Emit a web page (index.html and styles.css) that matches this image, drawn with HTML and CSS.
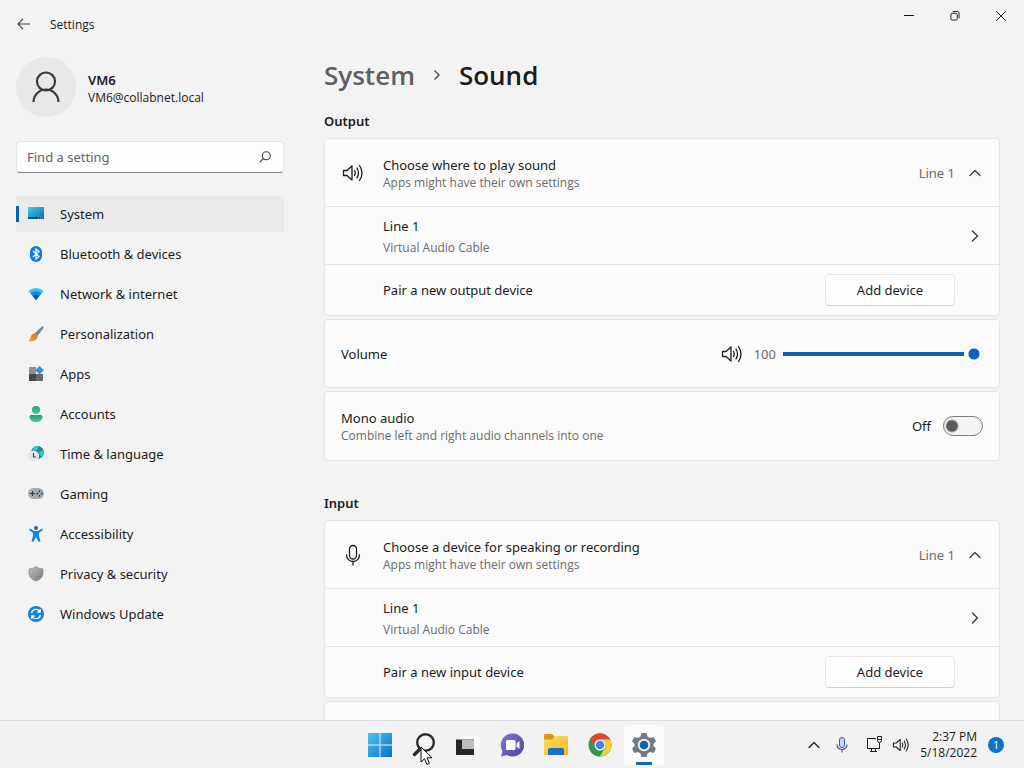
FILE: index.html
```html
<!DOCTYPE html>
<html lang="en">
<head>
<meta charset="utf-8">
<title>Settings - Sound</title>
<link rel="stylesheet" href="styles.css">
</head>
<body>
<svg class="defs" width="0" height="0" aria-hidden="true">
  <defs>
    <linearGradient id="g-screen" x1="0" y1="0" x2="1" y2="1"><stop offset="0" stop-color="#3fd0e8"/><stop offset="1" stop-color="#0a6aa8"/></linearGradient>
    <linearGradient id="g-brush" x1="0" y1="1" x2="1" y2="0"><stop offset="0" stop-color="#f7a145"/><stop offset="1" stop-color="#d96a1c"/></linearGradient>
    <linearGradient id="g-gray" x1="0" y1="0" x2="1" y2="1"><stop offset="0" stop-color="#c2c5c8"/><stop offset="1" stop-color="#74787c"/></linearGradient>
    <linearGradient id="g-green" x1="0" y1="0" x2="0" y2="1"><stop offset="0" stop-color="#1fa37a"/><stop offset="1" stop-color="#3fcf9a"/></linearGradient>
    <linearGradient id="g-win" x1="0" y1="0" x2="1" y2="1"><stop offset="0" stop-color="#4cc4f5"/><stop offset="1" stop-color="#0a72cc"/></linearGradient>
    <linearGradient id="g-folder" x1="0" y1="0" x2="1" y2="1"><stop offset="0" stop-color="#ffdc63"/><stop offset="1" stop-color="#f4b91f"/></linearGradient>
    <linearGradient id="g-chat" x1="0" y1="0" x2="1" y2="1"><stop offset="0" stop-color="#7e78dc"/><stop offset="1" stop-color="#4a44a6"/></linearGradient>
    <symbol id="i-speaker" viewBox="0 0 22 20">
      <path d="M1.500 7.500 H5 L10 3 V17 L5 12.500 H1.500 Z M12.500 7.500 Q14 10 12.500 12.500 M15 5 Q18 10 15 15 M17.500 2.500 Q22.500 10 17.500 17.500" fill="none" stroke="currentColor" stroke-width="1.300" stroke-linejoin="round" stroke-linecap="round"/>
    </symbol>
    <symbol id="i-mic" viewBox="0 0 16 22">
      <path d="M4.500 5 A3.500 3.500 0 0 1 11.500 5 V11.500 A3.500 3.500 0 0 1 4.500 11.500 Z M1.500 11 A6.500 6.500 0 0 0 14.500 11 M8 17.500 V21" fill="none" stroke="currentColor" stroke-width="1.300" stroke-linecap="round"/>
    </symbol>
    <symbol id="i-up" viewBox="0 0 12 12"><path d="M1 8.500 L6 3.500 L11 8.500" fill="none" stroke="currentColor" stroke-width="1.200" stroke-linecap="round" stroke-linejoin="round"/></symbol>
    <symbol id="i-right" viewBox="0 0 12 12"><path d="M3.500 1 L8.500 6 L3.500 11" fill="none" stroke="currentColor" stroke-width="1.300" stroke-linecap="round" stroke-linejoin="round"/></symbol>
    <symbol id="i-crumb" viewBox="0 0 12 12"><path d="M4 2 L8 6 L4 10" fill="none" stroke="currentColor" stroke-width="1.700" stroke-linecap="round" stroke-linejoin="round"/></symbol>
  </defs>
</svg>

<div class="window">
  <header class="titlebar">
    <button class="back" aria-label="Back"><svg width="14" height="12" viewBox="0 0 14 12"><path d="M6 1 L1 6 L6 11 M1 6 H13" fill="none" stroke="#444" stroke-width="1.100"/></svg></button>
    <span class="app-name">Settings</span>
    <div class="caption">
      <button aria-label="Minimize"><svg width="10" height="10" viewBox="0 0 10 10"><path d="M0 4.500 H10" stroke="#111"/></svg></button>
      <button aria-label="Restore"><svg width="10" height="10" viewBox="0 0 11 11"><rect x="1" y="2.500" width="7" height="7.500" rx="1.500" fill="none" stroke="#111"/><path d="M3 .5 H8 A2 2 0 0 1 10 2.500 V8" fill="none" stroke="#111"/></svg></button>
      <button aria-label="Close"><svg width="10" height="10" viewBox="0 0 10 10"><path d="M0 0 L10 10 M10 0 L0 10" stroke="#222"/></svg></button>
    </div>
  </header>

  <div class="content">
    <aside class="sidebar">
      <div class="profile">
        <div class="avatar"><svg width="28" height="32" viewBox="0 0 28 32"><circle cx="14" cy="10.500" r="9" fill="none" stroke="#3a3a3a" stroke-width="2.200"/><path d="M1.500 31 A12.500 12.500 0 0 1 26.500 31" fill="none" stroke="#3a3a3a" stroke-width="2.200"/></svg></div>
        <div class="user"><div class="user-name">VM6</div><div class="user-mail">VM6@collabnet.local</div></div>
      </div>
      <div class="search">
        <input type="text" placeholder="Find a setting" aria-label="Find a setting">
        <svg width="12" height="12" viewBox="0 0 12 12"><circle cx="7.300" cy="4.700" r="4" fill="none" stroke="#444" stroke-width="1.100"/><path d="M4.500 7.500 L.8 11.200" stroke="#444" stroke-width="1.200"/></svg>
      </div>
      <nav class="nav">
        <a href="#" class="active"><svg viewBox="0 0 16 16"><rect y="1" width="16" height="12" rx="1" fill="url(#g-screen)"/><path d="M0 11 H16 V12 A1 1 0 0 1 15 13 H1 A1 1 0 0 1 0 12 Z" fill="#124b72"/><path d="M10 12 H11 M12 12 H13 M14 12 H15" stroke="#9be"/></svg>System</a>
        <a href="#"><svg viewBox="0 0 16 16"><rect x="2" width="12" height="16" rx="6" fill="#1279e0"/><path d="M5 5 L11 10.500 L8 13 V3 L11 5.500 L5 11" fill="none" stroke="#fff" stroke-width="1.200"/></svg>Bluetooth &amp; devices</a>
        <a href="#"><svg viewBox="0 0 16 16"><path d="M.5 5 Q8 -1 15.500 5 L8 14 Z" fill="#35c3f2"/><path d="M2.500 7.300 Q8 3 13.500 7.300 L8 14 Z" fill="#1b86dd"/><path d="M4.800 10 Q8 7.500 11.200 10 L8 14 Z" fill="#0b55b0"/></svg>Network &amp; internet</a>
        <a href="#"><svg viewBox="0 0 16 16"><path d="M15 .3 Q16 .7 15.500 2 L9.500 10 L6.500 7.500 L13.500 .8 Q14.300 .1 15 .3 Z" fill="#7d878e"/><path d="M6.500 7.500 L9.500 10 C10 14 5 16 .5 15 C3 13 2 8 6.500 7.500 Z" fill="url(#g-brush)"/></svg>Personalization</a>
        <a href="#"><svg viewBox="0 0 16 16"><path d="M1 1 H8 V8 H1 Z" fill="#8b8f92"/><path d="M1 8 H8 V15 H1 Z" fill="#45494c"/><path d="M8 8 H15 V15 H8 Z" fill="#66696c"/><path d="M11.500 0 L15.800 4.300 L11.500 8.600 L7.200 4.300 Z" fill="#2b93e6"/></svg>Apps</a>
        <a href="#"><svg viewBox="0 0 16 16"><circle cx="8" cy="4" r="4" fill="url(#g-green)"/><path d="M3 9 H13 A1.600 1.600 0 0 1 14.500 10.500 C14.500 14 12 16 8 16 S1.500 14 1.500 10.500 A1.600 1.600 0 0 1 3 9 Z" fill="url(#g-green)"/></svg>Accounts</a>
        <a href="#"><svg viewBox="0 0 16 16"><circle cx="9.500" cy="6.500" r="6.500" fill="#138da8"/><path d="M5.500 1.500 Q8.500 -.5 11 .3 L9 4 H5 Z M12 5 L15.800 5 Q16.300 8 14 11 L11 8 Z" fill="#35c6cc"/><circle cx="5.500" cy="10" r="5.500" fill="#e6e6ea"/><path d="M5.500 7 V11 H8" fill="none" stroke="#444" stroke-width="1.200"/></svg>Time &amp; language</a>
        <a href="#"><svg viewBox="0 0 16 16"><rect y="2" width="16" height="11" rx="5.500" fill="#a5adb4"/><path d="M4.500 5 V10 M2 7.500 H7" stroke="#353a3e" stroke-width="1.200"/><g fill="#353a3e"><circle cx="11.500" cy="5.200" r=".9"/><circle cx="11.500" cy="9.800" r=".9"/><circle cx="9.300" cy="7.500" r=".9"/><circle cx="13.700" cy="7.500" r=".9"/></g></svg>Gaming</a>
        <a href="#"><svg viewBox="0 0 16 16"><circle cx="8" cy="2" r="2" fill="#1269c0"/><path d="M2 2.500 L6 5 H10 L14 2.500 L15 4 L11 7 V10 L12.500 15.300 L10.500 16 L8 11 L5.500 16 L3.500 15.300 L5 10 V7 L1 4 Z" fill="#1b82dc"/></svg>Accessibility</a>
        <a href="#"><svg viewBox="0 0 16 16"><path d="M8 .5 Q11 3 15 3 V7 C15 11 12 13.500 8 15 C4 13.500 1 11 1 7 V3 Q5 3 8 .5 Z" fill="url(#g-gray)" stroke="#85898c" stroke-width=".8"/></svg>Privacy &amp; security</a>
        <a href="#"><svg viewBox="0 0 16 16"><circle cx="8" cy="8" r="8" fill="#1481d8"/><path d="M3.500 7 A4.700 4.700 0 0 1 12 5.500 M12.500 9 A4.700 4.700 0 0 1 4 10.500 M12.300 3 V6 H9.300 M3.700 13 V10 H6.700" fill="none" stroke="#fff" stroke-width="1.300"/></svg>Windows Update</a>
      </nav>
    </aside>

    <main class="main">
      <h1 class="crumbs"><a href="#">System</a><svg width="12" height="12"><use href="#i-crumb"/></svg><span>Sound</span></h1>

      <section class="group">
        <h2>Output</h2>
        <div class="card">
          <div class="row head">
            <svg class="lead" width="22" height="20"><use href="#i-speaker"/></svg>
            <div class="text"><div class="label">Choose where to play sound</div><div class="note">Apps might have their own settings</div></div>
            <span class="value">Line 1</span>
            <button class="icon-btn" aria-label="Collapse output devices"><svg width="12" height="12"><use href="#i-up"/></svg></button>
          </div>
          <div class="row device">
            <div class="text"><div class="label">Line 1</div><div class="note">Virtual Audio Cable</div></div>
            <button class="icon-btn" aria-label="Line 1 output properties"><svg width="12" height="12"><use href="#i-right"/></svg></button>
          </div>
          <div class="row pair"><span class="text label">Pair a new output device</span><button class="btn">Add device</button></div>
        </div>
        <div class="card">
          <div class="row volume">
            <label class="text label" for="vol">Volume</label>
            <svg width="22" height="20"><use href="#i-speaker"/></svg>
            <output class="value" for="vol">100</output>
            <input id="vol" class="slider" type="range" min="0" max="100" value="100">
          </div>
        </div>
        <div class="card">
          <div class="row mono">
            <label class="text" for="mono"><span class="label">Mono audio</span><span class="note">Combine left and right audio channels into one</span></label>
            <span class="label">Off</span>
            <input id="mono" class="toggle" type="checkbox" role="switch">
          </div>
        </div>
      </section>

      <section class="group">
        <h2>Input</h2>
        <div class="card">
          <div class="row head">
            <svg class="lead" width="22" height="22"><use href="#i-mic"/></svg>
            <div class="text"><div class="label">Choose a device for speaking or recording</div><div class="note">Apps might have their own settings</div></div>
            <span class="value">Line 1</span>
            <button class="icon-btn" aria-label="Collapse input devices"><svg width="12" height="12"><use href="#i-up"/></svg></button>
          </div>
          <div class="row device">
            <div class="text"><div class="label">Line 1</div><div class="note">Virtual Audio Cable</div></div>
            <button class="icon-btn" aria-label="Line 1 input properties"><svg width="12" height="12"><use href="#i-right"/></svg></button>
          </div>
          <div class="row pair"><span class="text label">Pair a new input device</span><button class="btn">Add device</button></div>
        </div>
        <div class="card"><div class="row volume"></div></div>
      </section>
    </main>
  </div>
</div>

<footer class="taskbar">
  <div class="apps">
    <button aria-label="Start"><svg viewBox="0 0 24 24"><path d="M0 0 H11.500 V11.500 H0 Z M12.500 0 H24 V11.500 H12.500 Z M0 12.500 H11.500 V24 H0 Z M12.500 12.500 H24 V24 H12.500 Z" fill="url(#g-win)"/></svg></button>
    <button aria-label="Search"><svg viewBox="0 0 24 24"><circle cx="13.500" cy="9.500" r="8.300" fill="#f7f7f7" stroke="#2d2d2d" stroke-width="2.400"/><path d="M8 16 L2.500 21.500" stroke="#2d2d2d" stroke-width="3.400" stroke-linecap="round"/></svg></button>
    <button aria-label="Task view"><svg viewBox="0 0 24 24"><path d="M7 3 H23 V18 H7 Z" fill="#f9f9f9"/><path d="M0 6.500 H18 V22 H0 Z" fill="#262626"/><path d="M6 6.500 H18 V16 H6 Z" fill="#bdbdbd"/></svg></button>
    <button aria-label="Chat"><svg viewBox="0 0 24 24"><path d="M12.500 .5 A11.500 11.500 0 1 1 7 22 L1 23.500 L2.500 18 A11.500 11.500 0 0 1 12.500 .5 Z" fill="url(#g-chat)"/><rect x="6" y="7" width="9.500" height="10" rx="1.500" fill="#fff"/><path d="M16.500 10.500 L19.500 8 V16 L16.500 13.500 Z" fill="#fff"/></svg></button>
    <button aria-label="File Explorer"><svg viewBox="0 0 24 24"><path d="M0 2.500 A1.500 1.500 0 0 1 1.500 1 H8 L11 4 V9 H0 Z" fill="#d99a16"/><path d="M0 6.500 H8 L11 3 H22.500 A1.500 1.500 0 0 1 24 4.500 V22 H0 Z" fill="url(#g-folder)"/><path d="M4 22 V17 A2 2 0 0 1 6 15 H18 A2 2 0 0 1 20 17 V22 Z" fill="#1673c4"/></svg></button>
    <button aria-label="Chrome"><svg viewBox="0 0 24 24"><circle cx="12" cy="12" r="11.500" fill="#2f9a4d"/><path d="M2 6.300 A11.500 11.500 0 0 1 22 6.300 H12 A5.500 5.500 0 0 0 7 14.500 Z" fill="#e04435"/><path d="M22 6.300 A11.500 11.500 0 0 1 12 23.500 L17 14.500 A5.500 5.500 0 0 0 12 6.300 Z" fill="#fbcb32"/><circle cx="12" cy="12" r="5.500" fill="#fff"/><circle cx="12" cy="12" r="4.300" fill="#4285f0"/></svg></button>
    <button class="current" aria-label="Settings"><svg viewBox="0 0 24 24"><path d="M9.500 0 H14.500 L15.500 3.600 L18 5 L21.600 4 L24 8.300 L21.400 11 V13 L24 15.700 L21.600 20 L18 19 L15.500 20.400 L14.500 24 H9.500 L8.500 20.400 L6 19 L2.400 20 L0 15.700 L2.600 13 V11 L0 8.300 L2.400 4 L6 5 L8.500 3.600 Z" fill="#747b80"/><circle cx="12" cy="12" r="6.200" fill="#eceff1"/><circle cx="12" cy="12" r="4.300" fill="#145fa9"/></svg></button>
  </div>
  <div class="tray">
    <button class="tray-up" aria-label="Show hidden icons"><svg width="12" height="12"><use href="#i-up"/></svg></button>
    <button class="tray-mic" aria-label="Microphone"><svg width="12" height="16" viewBox="0 0 12 16"><path d="M3.500 3 A2.500 2.500 0 0 1 8.500 3 V8 A2.500 2.500 0 0 1 3.500 8 Z" fill="#c8daf3" stroke="#3b5ea0"/><path d="M1 7.500 A5 5 0 0 0 11 7.500 M6 12.500 V15.500" fill="none" stroke="#3b5ea0" stroke-width="1.200"/></svg></button>
    <button class="tray-net" aria-label="Network"><svg width="17" height="17" viewBox="0 0 17 17"><path d="M10 2.500 H1.500 V12.500 H13.500 V7 M4 15.500 H11 M5.500 12.500 V15.500 M9.500 12.500 V15.500 M11.500 .5 H15.500 V4.500 Q15.500 6.500 13.500 6.500 Q11.500 6.500 11.500 4.500 Z M11.500 3.500 H15.500" fill="none" stroke="#1f1f1f"/></svg></button>
    <button class="tray-vol" aria-label="Volume"><svg width="18" height="16"><use href="#i-speaker"/></svg></button>
    <div class="clock"><div>2:37 PM</div><div>5/18/2022</div></div>
    <span class="badge">1</span>
  </div>
</footer>
<svg class="pointer" width="13" height="20" viewBox="0 0 13 20" aria-hidden="true"><path d="M1 1 V16 L4.500 12.700 L7 18.500 L9.500 17.400 L7 11.800 H12 Z" fill="#fff" stroke="#111"/></svg>
</body>
</html>
```
FILE: styles.css
```css
* { box-sizing: border-box; }

body {
  margin: 0;
  height: 100vh;
  display: flex;
  flex-direction: column;
  overflow: hidden;
  background: #f3f3f3;
  color: #1b1b1b;
  font: 13px/20px "Noto Sans", "Open Sans", sans-serif;
}

button {
  border: 0;
  padding: 0;
  background: none;
  color: inherit;
  font: inherit;
  display: grid;
  place-items: center;
}

a { color: inherit; text-decoration: none; }
svg { display: block; flex: none; }
.defs, .pointer { position: absolute; }
.pointer { left: 420px; top: 746px; pointer-events: none; }

.window { flex: 1; min-height: 0; display: flex; flex-direction: column; }

.titlebar { display: flex; align-items: center; height: 48px; flex: none; }
.back { width: 48px; height: 48px; }
.app-name { flex: 1; padding: 2px 0 0 2px; }
.caption { display: flex; align-self: flex-start; }
.caption button { width: 46px; height: 32px; }

.app-name, .user-mail, .note, .clock {
  font-family: "Open Sans", "Noto Sans", sans-serif;
  font-size: 12px;
}

.content { flex: 1; min-height: 0; display: flex; overflow: hidden; }

.sidebar { width: 300px; flex: none; padding: 9px 16px 0; }
.profile { display: flex; align-items: center; gap: 12px; }
.avatar {
  width: 60px;
  height: 60px;
  border-radius: 50%;
  background: #e8e8e8;
  display: grid;
  place-items: center;
}
.user { padding-top: 4px; line-height: 18px; }
.user-name { font-weight: 600; }

.search {
  display: flex;
  align-items: center;
  height: 32px;
  margin-top: 24px;
  padding: 0 12px 0 10px;
  background: #fdfdfd;
  border: 1px solid #e5e5e5;
  border-bottom-color: #868686;
  border-radius: 4px;
}
.search input {
  flex: 1;
  min-width: 0;
  padding: 0;
  border: 0;
  outline: 0;
  background: none;
  font: inherit;
}
.search input::placeholder { color: #656565; opacity: 1; }

.nav { display: flex; flex-direction: column; gap: 4px; margin-top: 23px; }
.nav a {
  display: flex;
  align-items: center;
  gap: 16px;
  height: 36px;
  padding-left: 12px;
  border-radius: 4px;
}
.nav svg { width: 16px; height: 16px; }
.nav .active {
  background: linear-gradient(#0a5fb0, #0a5fb0) 0 50% / 3px 16px no-repeat #eaeaea;
}

.main { flex: 1; min-width: 0; padding: 9px 24px 0; }

.crumbs {
  display: flex;
  align-items: center;
  gap: 16px;
  margin: 0;
  font: 600 26px/36px "Open Sans", "Noto Sans", sans-serif;
}
.crumbs a, .crumbs svg { color: #5f5f5f; }

.group { display: flex; flex-direction: column; gap: 3px; }
.group + .group { margin-top: 32px; }
.group h2 { margin: 0; padding: 0 0 4px; font-size: 13px; line-height: 20px; font-weight: 600; }
.crumbs + .group { margin-top: 18px; }

.card { background: #fbfbfb; border: 1px solid #e5e5e5; border-radius: 4px; }
.row { display: flex; align-items: center; padding: 0 16px; }
.row + .row { border-top: 1px solid #e5e5e5; }
.row .text { flex: 1; }
.head { min-height: 67px; }
.device { min-height: 58px; padding-left: 58px; }
.device .note { padding-top: 4px; }
.pair { min-height: 51px; padding: 0 44px 0 58px; }
.volume { min-height: 67px; }
.mono { min-height: 68px; }
.lead { margin: 0 19px 0 1px; }
.label { color: #1b1b1b; }
.note { color: #6b6b6b; line-height: 16px; }
.mono .text span { display: block; }
.value { color: #6b6b6b; }
.icon-btn { width: 32px; height: 32px; margin: 0 -8px 0 4px; color: #333; }
.btn {
  width: 130px;
  height: 32px;
  background: #fefefe;
  border: 1px solid #e8e8e8;
  border-bottom-color: #cfcfcf;
  border-radius: 4px;
}

.volume .value { margin: 0 7px 0 11px; }
.slider {
  appearance: none;
  width: 201px;
  height: 20px;
  margin: 0 -1px 0 0;
  background: linear-gradient(#1160b4, #1160b4) 0 50% / calc(100% - 20px) 4px no-repeat;
}
.slider::-webkit-slider-thumb {
  appearance: none;
  width: 20px;
  height: 20px;
  border: 1px solid #ececec;
  border-radius: 50%;
  background: radial-gradient(circle, #0c62bd 5px, #fff 6px);
}

.toggle {
  appearance: none;
  width: 40px;
  height: 20px;
  margin: 0 0 0 12px;
  border: 1px solid #7d7d7d;
  border-radius: 10px;
  background: radial-gradient(circle at 8px 9px, #5c5c5c 5px, transparent 7px) #f4f4f4;
}

.taskbar {
  flex: none;
  display: grid;
  grid-template-columns: 1fr auto 1fr;
  align-items: center;
  height: 48px;
  border-top: 1px solid #dedede;
  background: #f2f2f2;
}
.apps { grid-column: 2; display: flex; gap: 4px; }
.apps button { width: 40px; height: 40px; border-radius: 4px; }
.apps svg { width: 24px; height: 24px; }
.apps .current {
  background: linear-gradient(#1268b5, #1268b5) 50% 100% / 16px 3px no-repeat #fcfcfc;
}

.tray { justify-self: end; display: flex; align-items: center; padding-right: 20px; }
.tray-up { width: 28px; height: 32px; }
.tray-mic { width: 28px; height: 32px; }
.tray-net { width: 36px; height: 32px; }
.tray-vol { width: 16px; height: 32px; margin-right: 12px; }
.clock { line-height: 16px; text-align: right; }
.badge {
  width: 16px;
  height: 16px;
  margin-left: 11px;
  border-radius: 50%;
  background: #0c74cf;
  color: #fff;
  font-size: 10px;
  line-height: 16px;
  text-align: center;
}
```
